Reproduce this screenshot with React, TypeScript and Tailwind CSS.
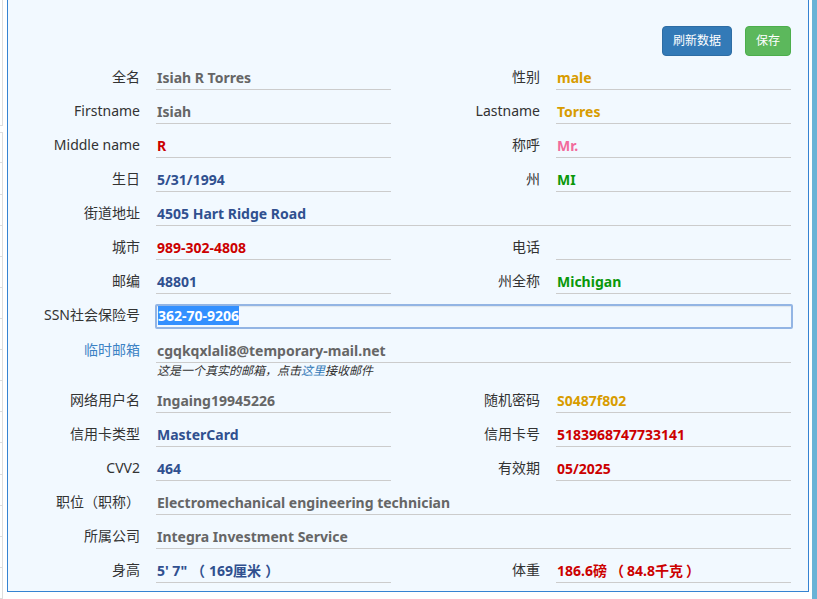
import React from "react";

const FONT = { fontFamily: '"Noto Sans", "Noto Sans CJK SC", sans-serif' };

const GRAY = "text-[#666666]";
const NAVY = "text-[#30508f]";
const RED = "text-[#cc0000]";
const GOLD = "text-[#d89c00]";
const PINK = "text-[#f26b9c]";
const GREEN = "text-[#0a980a]";

interface FieldProps {
  label: string;
  value?: React.ReactNode;
  color?: string;
  labelW?: string;
  valueW?: string;
  labelColor?: string;
}

function Field({
  label,
  value,
  color = GRAY,
  labelW = "w-[132px]",
  valueW = "w-[235px]",
  labelColor = "text-[#333333]",
}: FieldProps) {
  return (
    <div className="flex">
      <div className={`${labelW} pt-[1px] text-right text-[14px] leading-[20px] ${labelColor}`}>{label}</div>
      <div
        className={`ml-[16px] ${valueW} h-[24px] border-b border-[#cccccc] pl-[1px] pt-[1px] text-[14px] font-bold leading-[22px] ${color}`}
      >
        {value}
      </div>
    </div>
  );
}

function Pair({ left, right }: { left: FieldProps; right: FieldProps }) {
  return (
    <div className="mt-[10px] flex">
      <Field {...left} />
      <Field {...right} labelW="w-[149px]" />
    </div>
  );
}

function Full(props: FieldProps) {
  return (
    <div className="mt-[10px]">
      <Field {...props} valueW="w-[635px]" />
    </div>
  );
}

function LeftStrip() {
  const cells = Array.from({ length: 14 });
  return (
    <div className="flex w-[7px] flex-col">
      <div className="h-[130px] w-[3px] border-r border-b border-[#dddddd]" />
      <div className="mt-[6px] h-[32px] w-[3px] border-r border-b border-t border-[#dddddd]" />
      {cells.map((_, i) => (
        <div key={i} className="h-[32px] w-[3px] border-r border-b border-[#dddddd]" />
      ))}
    </div>
  );
}

export default function App() {
  return (
    <div className="flex h-[599px] w-[817px] overflow-hidden bg-white" style={FONT}>
      <LeftStrip />
      <div className="h-[592px] w-[802px] border-x border-b border-[#3583d2] bg-[#f2f9ff]">
        <div className="flex justify-end gap-[13px] pr-[17px] pt-[26px]">
          <button className="h-[30px] rounded-[4px] border border-[#2e6da4] bg-[#337ab7] px-[10px] text-[12px] text-white">
            刷新数据
          </button>
          <button className="h-[30px] rounded-[4px] border border-[#4cae4c] bg-[#5cb85c] px-[10px] text-[12px] text-white">
            保存
          </button>
        </div>

        <Pair
          left={{ label: "全名", value: "Isiah R Torres" }}
          right={{ label: "性别", value: "male", color: GOLD }}
        />
        <Pair
          left={{ label: "Firstname", value: "Isiah" }}
          right={{ label: "Lastname", value: "Torres", color: GOLD }}
        />
        <Pair
          left={{ label: "Middle name", value: "R", color: RED }}
          right={{ label: "称呼", value: "Mr.", color: PINK }}
        />
        <Pair
          left={{ label: "生日", value: "5/31/1994", color: NAVY }}
          right={{ label: "州", value: "MI", color: GREEN }}
        />
        <Full label="街道地址" value="4505 Hart Ridge Road" color={NAVY} />
        <Pair
          left={{ label: "城市", value: "989-302-4808", color: RED }}
          right={{ label: "电话", value: "" }}
        />
        <Pair
          left={{ label: "邮编", value: "48801", color: NAVY }}
          right={{ label: "州全称", value: "Michigan", color: GREEN }}
        />

        <div className="mt-[10px] flex">
          <div className="w-[132px] pt-[1px] text-right text-[14px] leading-[20px] text-[#333333]">SSN社会保险号</div>
          <div className="ml-[15px] h-[25px] w-[638px] rounded-[2px] border-2 border-[#93b5e4] bg-[#f2f9ff] pl-[1px] text-[14px] font-bold leading-[20px] text-[#30508f] shadow-[inset_0_1px_1px_rgba(0,0,0,0.08)]">
            <span className="bg-[#3390ff] text-white">362-70-9206</span>
          </div>
        </div>

        <div className="mt-[10px]">
          <Field
            label="临时邮箱"
            labelColor="text-[#3c82c4]"
            value="cgqkqxlali8@temporary-mail.net"
            valueW="w-[635px]"
          />
          <div className="ml-[149px] h-[16px] text-[12px] italic leading-[16px] text-[#333333]">
            这是一个真实的邮箱，点击<span className="text-[#337ab7]">这里</span>接收邮件
          </div>
        </div>

        <Pair
          left={{ label: "网络用户名", value: "Ingaing19945226" }}
          right={{ label: "随机密码", value: "S0487f802", color: GOLD }}
        />
        <Pair
          left={{ label: "信用卡类型", value: "MasterCard", color: NAVY }}
          right={{ label: "信用卡号", value: "5183968747733141", color: RED }}
        />
        <Pair
          left={{ label: "CVV2", value: "464", color: NAVY }}
          right={{ label: "有效期", value: "05/2025", color: RED }}
        />
        <Full label="职位（职称）" value="Electromechanical engineering technician" />
        <Full label="所属公司" value="Integra Investment Service" />
        <Pair
          left={{
            label: "身高",
            value: (
              <>
                5' 7"<span className="mx-[4px]">（</span>169厘米<span className="ml-[4px]">）</span>
              </>
            ),
            color: NAVY,
          }}
          right={{
            label: "体重",
            value: (
              <>
                186.6磅<span className="mx-[3px]">（</span>84.8千克<span className="ml-[3px]">）</span>
              </>
            ),
            color: RED,
          }}
        />
      </div>
      <div className="ml-[3px] h-full w-[5px] bg-[#6ab3d6]" />
    </div>
  );
}
